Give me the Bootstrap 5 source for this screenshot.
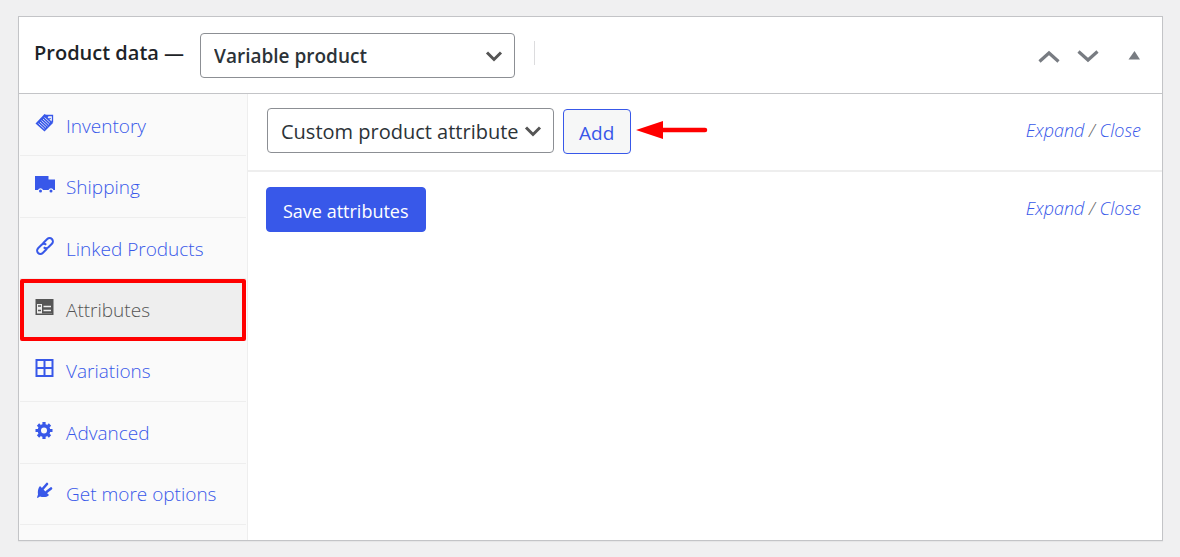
<!DOCTYPE html>
<html lang="en">
<head>
<meta charset="utf-8">
<meta name="viewport" content="width=device-width, initial-scale=1">
<title>Product data</title>
<link href="https://cdn.jsdelivr.net/npm/bootstrap@5.3.0/dist/css/bootstrap.min.css" rel="stylesheet">
<style>
  :root { --accent: #3858e9; --line: #eeeeee; --edge: #c3c4c7; }
  body { background: #f0f0f1; font-family: "Segoe UI", "Open Sans", "Noto Sans", sans-serif; font-size: 19px; line-height: 24px; color: #2c3338; }
  a { color: var(--accent); text-decoration: none; }
  .page { padding: 16px 17px 16px 18px; }
  .postbox { min-height: calc(100vh - 32px); border: 1px solid var(--edge); border-radius: 0; box-shadow: 0 1px 1px rgba(0,0,0,.04); }
  .postbox-head { height: 77px; border-bottom: 1px solid var(--edge); padding: 16px 16px 0 15px; }
  .postbox-title { font-size: 20px; line-height: 24px; font-weight: 600; color: #1d2327; margin: 8px 16px 0 0; }
  .picker { height: 45px; border: 1px solid #8c8f94; border-radius: 4px; padding: 2px 32px 0 13px; color: #2c3338; font-size: 20px;
    background-size: 20px 20px; background-position: right 10px center;
    background-image: url("data:image/svg+xml,%3Csvg xmlns='http://www.w3.org/2000/svg' viewBox='0 0 20 20'%3E%3Cpath d='M3 6.500l7 7 7-7' fill='none' stroke='%23555' stroke-width='3'/%3E%3C/svg%3E"); }
  .picker-type { width: 315px; font-size: 19px; font-weight: 600; }
  .picker-attr { width: 287px; }
  .divider { width: 1px; height: 24px; background: #dcdcde; margin: 8px 0 0 19px; }
  .order-btn { width: 39px; height: 24px; }
  .toggle-btn { width: 24px; height: 24px; margin-left: 15px; }
  .tabs { width: 229px; background: #fafafa; border-right: 1px solid var(--line); padding: 1px 1px 15px; }
  .tab-link { border-bottom: 1px solid var(--line); padding: 1px 0 0 15px; font-weight: 300; }
  .tab-link svg { width: 22px; height: 22px; margin: -6px 9px 0 0; flex: none; }
  .tab-link.active { background: #eeeeee; color: #555; outline: 4px solid #f00; outline-offset: -4px; border-radius: 2px; }
  .bar { padding: 14px 21px 0 19px; }
  .bar-top { height: 78px; border-bottom: 2px solid var(--line); }
  .act { height: 45px; padding: 2px 15px 0; border-radius: 4px; font-size: 19px; line-height: 24px; }
  .act-add { color: var(--accent); border-color: var(--accent); background: #f6f7f7; margin: 1px 0 0 9px; padding: 2px 16px 0 15px; }
  .act-save { font-size: 18px; padding: 2px 16px 0; color: #fff; background: var(--accent); border-color: var(--accent); margin: 1px 0 0 -1px; }
  .arrow { margin: 12px 0 0 5px; }
  .toggles { font-family: "Open Sans", "Noto Sans", sans-serif; font-size: 18px; font-weight: 300; font-style: italic; color: #666; margin-top: 10px; }
</style>
</head>
<body>
<main class="page">
  <section class="postbox card">
    <header class="postbox-head d-flex align-items-start">
      <h1 class="postbox-title text-nowrap"><label for="product-type">Product data —</label></h1>
      <select id="product-type" class="form-select picker picker-type">
        <option>Variable product</option>
      </select>
      <span class="divider"></span>
      <div class="d-flex ms-auto pt-1 mt-2">
        <button type="button" class="btn p-0 border-0 order-btn d-flex align-items-center justify-content-center" aria-label="Move up">
          <svg width="22" height="14" viewBox="0 0 22 14"><path d="M1.500 11.500L11 3 20.500 11.500" fill="none" stroke="#787c82" stroke-width="3.200"/></svg>
        </button>
        <button type="button" class="btn p-0 border-0 order-btn d-flex align-items-center justify-content-center" aria-label="Move down">
          <svg width="22" height="14" viewBox="0 0 22 14"><path d="M1.500 1.500L11 10 20.500 1.500" fill="none" stroke="#787c82" stroke-width="3.200"/></svg>
        </button>
        <button type="button" class="btn p-0 border-0 toggle-btn d-flex align-items-center justify-content-center" aria-label="Toggle panel">
          <svg width="12" height="12" viewBox="0 0 12 12"><path d="M.5 8.500L6.500 0l5.500 8.500z" fill="#787c82"/></svg>
        </button>
      </div>
    </header>
    <div class="d-flex flex-fill">
      <nav class="tabs d-flex flex-column flex-shrink-0">
        <a href="#" class="tab-link d-flex flex-fill align-items-center">
          <svg viewBox="0 0 22 22"><path d="M.5 11.500L9.500 2l3 1.500L18 11l-8.500 8.500z" fill="currentColor"/><path d="M3.500 11.500l6 5.500M5 10l6 5.500M6.500 8.500l6 5.500M8 7l6 5.500M9.500 5.500l5.500 5" stroke="#fafafa" stroke-width=".8"/><path d="M11 3.500h6.500v7" fill="none" stroke="currentColor" stroke-width="1.300"/><path d="M12.500 5h3.500v4z" fill="#fafafa"/><circle cx="15" cy="6.500" r=".8" fill="currentColor"/></svg>Inventory</a>
        <a href="#" class="tab-link d-flex flex-fill align-items-center">
          <svg viewBox="0 0 22 22"><path d="M0 3h13.500v3.500H20V17h-1.500a2.700 2.700 0 0 0-5 0h-5.500a2.700 2.700 0 0 0-5 0H0z" fill="currentColor"/><circle cx="5.500" cy="18" r="1.500" fill="currentColor"/><circle cx="16" cy="18" r="1.500" fill="currentColor"/></svg>Shipping</a>
        <a href="#" class="tab-link d-flex flex-fill align-items-center">
          <svg viewBox="0 0 22 22"><g transform="rotate(-45 10 11)" fill="none" stroke="currentColor" stroke-width="2"><path d="M9.500 14.300H3.500a3.300 3.300 0 0 1 0-6.600H8.500a3.300 3.300 0 0 1 3.200 3.300"/><path d="M10.500 7.700h6a3.300 3.300 0 0 1 0 6.600h-5a3.300 3.300 0 0 1-3.200-3.300"/></g></svg>Linked Products</a>
        <a href="#" class="tab-link active d-flex flex-fill align-items-center" aria-current="page">
          <svg viewBox="0 0 22 22"><path d="M.5 3h18v16H.5z" fill="currentColor"/><path d="M2 8h15v9.500H2z" fill="#eee"/><path d="M3 10h3M3 14.500h3" stroke="currentColor" stroke-width="1.500"/><path d="M7 8h10v9.500H7z" fill="currentColor"/><path d="M8.500 10.500h7.500M8.500 14.500h7.500" stroke="#eee" stroke-width="1.500"/></svg>Attributes</a>
        <a href="#" class="tab-link d-flex flex-fill align-items-center">
          <svg viewBox="0 0 22 22"><path d="M1.500 3h16v16h-16zM9.500 3v16M1.500 11h16" fill="none" stroke="currentColor" stroke-width="2"/></svg>Variations</a>
        <a href="#" class="tab-link d-flex flex-fill align-items-center">
          <svg viewBox="0 0 22 22"><circle cx="9" cy="11.500" r="4.700" fill="none" stroke="currentColor" stroke-width="3.400"/><path d="M9 3v3M9 17v3M.5 11.500h3M14.500 11.500h3M3 5.500l2 2M13 15.500l2 2M15 5.500l-2 2M5 15.500l-2 2" stroke="currentColor" stroke-width="3.200"/></svg>Advanced</a>
        <a href="#" class="tab-link d-flex flex-fill align-items-center">
          <svg viewBox="0 0 22 22"><path d="M5 6l9 9c-2 2.500-6 2.500-9 1.500l-2.500 1.500-.5-.5 1-3C2.500 11.500 3 8 5 6z" fill="currentColor"/><path d="M8 8.500l4-4.500M11.500 12l4.500-3.500" stroke="currentColor" stroke-width="2.600" stroke-linecap="round"/></svg>Get more options</a>
      </nav>
      <div class="flex-fill">
        <div class="bar bar-top d-flex align-items-start">
          <select class="form-select picker picker-attr" aria-label="Attribute">
            <option>Custom product attribute</option>
          </select>
          <button type="button" class="btn act act-add">Add</button>
          <svg class="arrow" width="72" height="20" viewBox="0 0 72 20"><path d="M25 10h44" stroke="#f00" stroke-width="4.500" stroke-linecap="round"/><path d="M0 10L27 1v18z" fill="#f00"/></svg>
          <span class="toggles ms-auto text-nowrap"><a href="#">Expand</a> / <a href="#">Close</a></span>
        </div>
        <div class="bar d-flex align-items-start">
          <button type="button" class="btn act act-save">Save attributes</button>
          <span class="toggles ms-auto text-nowrap"><a href="#">Expand</a> / <a href="#">Close</a></span>
        </div>
      </div>
    </div>
  </section>
</main>
<script src="https://cdn.jsdelivr.net/npm/bootstrap@5.3.0/dist/js/bootstrap.bundle.min.js"></script>
</body>
</html>
